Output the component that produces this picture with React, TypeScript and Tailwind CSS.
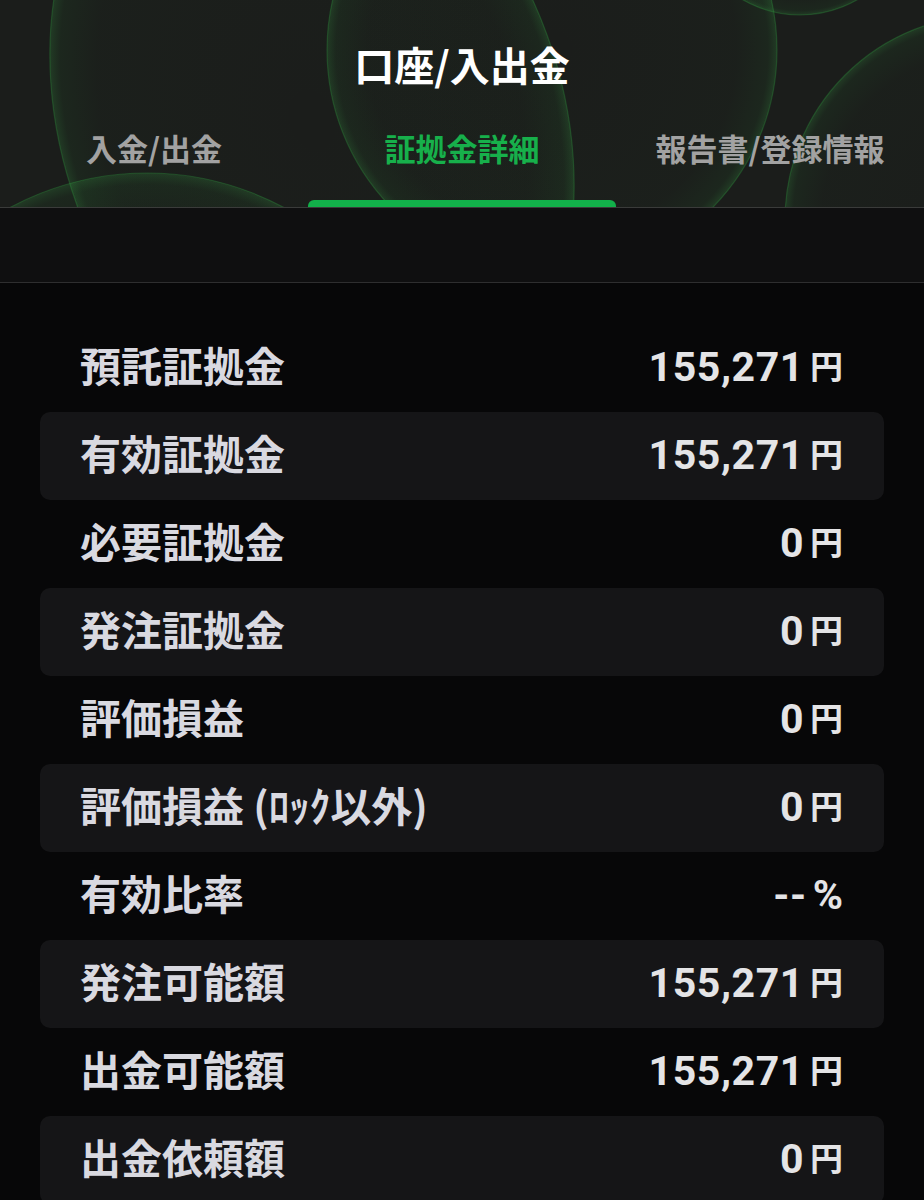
import React from "react";

const rows: [string, string, string][] = [
  ["預託証拠金", "155,271", "円"],
  ["有効証拠金", "155,271", "円"],
  ["必要証拠金", "0", "円"],
  ["発注証拠金", "0", "円"],
  ["評価損益", "0", "円"],
  ["評価損益 (ﾛｯｸ以外)", "0", "円"],
  ["有効比率", "--", "%"],
  ["発注可能額", "155,271", "円"],
  ["出金可能額", "155,271", "円"],
  ["出金依頼額", "0", "円"],
];

const tabs = ["入金/出金", "証拠金詳細", "報告書/登録情報"];

function Bubbles() {
  return (
    <svg className="absolute inset-0 h-full w-full" viewBox="0 0 924 207" preserveAspectRatio="none">
      <defs>
        <radialGradient id="rim" cx="50%" cy="50%" r="50%">
          <stop offset="0%" stopColor="#2a9a3c" stopOpacity="0" />
          <stop offset="82%" stopColor="#2a9a3c" stopOpacity="0.02" />
          <stop offset="96%" stopColor="#2a9a3c" stopOpacity="0.08" />
          <stop offset="100%" stopColor="#3cb44c" stopOpacity="0.2" />
        </radialGradient>
      </defs>
      <g stroke="#2f9a3f" strokeOpacity="0.3" strokeWidth="1.2" fill="url(#rim)">
        <ellipse cx="312" cy="120" rx="250" ry="340" transform="rotate(-20 312 120)" />
        <circle cx="552" cy="50" r="225" />
        <circle cx="800" cy="-100" r="115" />
        <circle cx="990" cy="220" r="205" />
        <circle cx="147" cy="462" r="289" />
      </g>
    </svg>
  );
}

export default function App() {
  return (
    <div className="h-[1200px] w-[924px] overflow-hidden bg-[#070708] font-['Roboto','Noto_Sans_CJK_JP',sans-serif]">
      <header className="relative h-[208px] overflow-hidden border-b border-[#3a3b3a] bg-[#1b1d1b]">
        <Bubbles />
        <div className="relative flex h-full flex-col">
          <h1 className="pt-[44px] pb-[16px] text-center font-['Noto_Sans_CJK_JP',sans-serif] text-[40px] font-bold leading-[40px] text-white">
            口座/入出金
          </h1>
          <nav className="grid flex-1 grid-cols-3">
            {tabs.map((t, i) => (
              <div key={t} className="flex flex-col items-center">
                <span
                  className={`pt-[32px] font-['Noto_Sans_CJK_JP',sans-serif] text-[31px] font-bold leading-[31px] ${
                    i === 1 ? "text-[#17b04b]" : "text-[#a2a2a2]"
                  }`}
                >
                  {t}
                </span>
                <div className="flex-1" />
                {i === 1 && <div className="h-[7px] w-full rounded-t-[6px] bg-[#12b04a]" />}
              </div>
            ))}
          </nav>
        </div>
      </header>

      <div className="h-[75px] border-b border-[#2e2e2f] bg-[#0f0f10]" />

      <div className="flex flex-col px-[40px] pt-[41px]">
        {rows.map(([label, value, unit], i) => (
          <div
            key={label}
            className={`flex h-[88px] shrink-0 items-center justify-between rounded-[10px] pl-[40px] pr-[41px] ${
              i % 2 === 1 ? "bg-[#151517]" : ""
            }`}
          >
            <span className="pb-[7px] font-['Noto_Sans_CJK_JP',sans-serif] text-[41px] font-bold leading-none text-[#d9d9e0]">
              {label}
            </span>
            <span className="flex items-center pb-[2px] text-[#e4e4e6]">
              <span className="font-['Roboto',sans-serif] text-[41px] font-bold leading-none tracking-[0.6px]">
                {value}
              </span>
              <span
                className={`ml-[6px] font-bold leading-none ${
                  unit === "%"
                    ? "font-['Roboto',sans-serif] text-[41px]"
                    : "pb-[3px] font-['Noto_Sans_CJK_JP',sans-serif] text-[33px]"
                }`}
              >
                {unit}
              </span>
            </span>
          </div>
        ))}
      </div>
    </div>
  );
}
